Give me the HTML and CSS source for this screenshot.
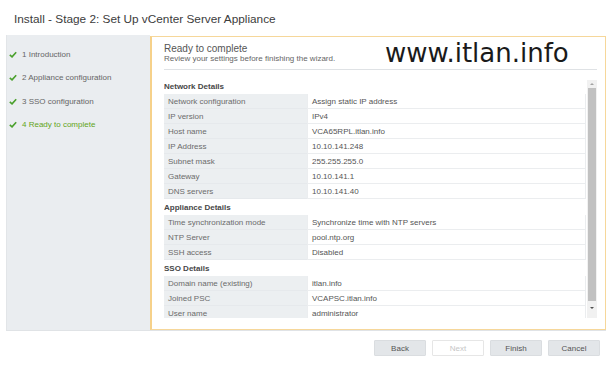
FILE: index.html
```html
<!DOCTYPE html>
<html lang="en">
<head>
    <meta charset="UTF-8">
    <title>Install - Stage 2</title>
    <link rel="stylesheet" href="styles.css">
</head>
<body>
    <h1 class="title">Install - Stage 2: Set Up vCenter Server Appliance</h1>
    <div class="wizard">
        <ul class="steps">
            <li class="step"><svg class="check" viewBox="0 0 10 8"><polyline points="1,4.5 3.8,7 9,1.2"/></svg>1 Introduction</li>
            <li class="step"><svg class="check" viewBox="0 0 10 8"><polyline points="1,4.5 3.8,7 9,1.2"/></svg>2 Appliance configuration</li>
            <li class="step"><svg class="check" viewBox="0 0 10 8"><polyline points="1,4.5 3.8,7 9,1.2"/></svg>3 SSO configuration</li>
            <li class="step active"><svg class="check" viewBox="0 0 10 8"><polyline points="1,4.5 3.8,7 9,1.2"/></svg>4 Ready to complete</li>
        </ul>
        <div class="content">
            <div class="head">
                <div class="head-title">Ready to complete</div>
                <div class="head-sub">Review your settings before finishing the wizard.</div>
            </div>
            <div class="watermark">www.itlan.info</div>
            <div class="scroll">
                <div class="table">
                    <div class="section first">Network Details</div>
                    <div class="row"><div class="label">Network configuration</div><div class="value">Assign static IP address</div></div>
                    <div class="row"><div class="label">IP version</div><div class="value">IPv4</div></div>
                    <div class="row"><div class="label">Host name</div><div class="value">VCA65RPL.itlan.info</div></div>
                    <div class="row"><div class="label">IP Address</div><div class="value">10.10.141.248</div></div>
                    <div class="row"><div class="label">Subnet mask</div><div class="value">255.255.255.0</div></div>
                    <div class="row"><div class="label">Gateway</div><div class="value">10.10.141.1</div></div>
                    <div class="row"><div class="label">DNS servers</div><div class="value">10.10.141.40</div></div>

                    <div class="section">Appliance Details</div>
                    <div class="row"><div class="label">Time synchronization mode</div><div class="value">Synchronize time with NTP servers</div></div>
                    <div class="row"><div class="label">NTP Server</div><div class="value">pool.ntp.org</div></div>
                    <div class="row"><div class="label">SSH access</div><div class="value">Disabled</div></div>

                    <div class="section">SSO Details</div>
                    <div class="row"><div class="label">Domain name (existing)</div><div class="value">itlan.info</div></div>
                    <div class="row"><div class="label">Joined PSC</div><div class="value">VCAPSC.itlan.info</div></div>
                    <div class="row"><div class="label">User name</div><div class="value">administrator</div></div>
                </div>
                <div class="scrollbar">
                    <span class="arrow up"></span>
                    <span class="thumb"></span>
                    <span class="arrow down"></span>
                </div>
            </div>
        </div>
    </div>
    <div class="buttons">
        <button class="btn">Back</button>
        <button class="btn disabled">Next</button>
        <button class="btn">Finish</button>
        <button class="btn">Cancel</button>
    </div>
</body>
</html>
```

FILE: styles.css
```css
body {
    margin: 0;
    background-color: #fff;
    font-family: 'Liberation Sans', Arial, sans-serif;
    color: #555;
}

.title {
    margin: 0;
    padding: 12px 0 0 14px;
    height: 23px;
    font-size: 11.8px;
    font-weight: normal;
    line-height: 14px;
    color: #3c3c3c;
}

.wizard {
    display: flex;
    margin: 0 6px 0 6px;
    height: 295px;
    border-bottom: 1px solid #e0e3e6;
}

/* Steps */
.steps {
    width: 144px;
    margin: 0;
    padding: 8px 0 0 0;
    list-style: none;
    background-color: #eaedf0;
    border-left: 1px solid #e2e5e8;
    box-sizing: border-box;
}

.step {
    display: flex;
    align-items: center;
    height: 23.3px;
    font-size: 8px;
    color: #666;
}

.step.active {
    color: #62a420;
}

.check {
    width: 8px;
    height: 7px;
    margin: 0 5px 0 2px;
    fill: none;
    stroke: #4aa02c;
    stroke-width: 2;
}

/* Content panel */
.content {
    position: relative;
    flex: 1;
    margin-top: 1px;
    padding: 0 8px 0 12px;
    border: 1px solid #f6d79a;
    border-left: 2px solid #f6d18a;
    background-color: #fff;
}

.head {
    padding: 6px 0 5px;
    border-bottom: 1px solid #dfe2e5;
}

.head-title {
    font-size: 10px;
    line-height: 11px;
    color: #555;
}

.head-sub {
    font-size: 8px;
    line-height: 10px;
    color: #666;
}

.watermark {
    position: absolute;
    top: 1px;
    left: 233px;
    font-family: 'DejaVu Sans', sans-serif;
    font-size: 26px;
    color: #1a1a1a;
}

.scroll {
    display: flex;
    gap: 1px;
    margin-top: 10px;
    height: 238px;
    overflow: hidden;
}

.table {
    flex: 1;
}

.section {
    height: 16px;
    line-height: 17px;
    font-size: 8px;
    font-weight: bold;
    color: #474747;
}

.section.first {
    height: 14px;
    line-height: 14px;
}

.row {
    display: flex;
    height: 15px;
    font-size: 8px;
    line-height: 15px;
}

.label {
    width: 143px;
    padding-left: 4px;
    box-sizing: border-box;
    background-color: #eceff1;
    border-bottom: 1px solid #e6e9ec;
    color: #6b6b6b;
    white-space: nowrap;
}

.value {
    flex: 1;
    padding-left: 4px;
    border: 1px solid #ebedef;
    border-top: none;
    color: #555;
    white-space: nowrap;
}

.scrollbar {
    display: flex;
    flex-direction: column;
    align-items: center;
    width: 10px;
    background-color: #f1f1f1;
}

.arrow {
    width: 0;
    height: 0;
    border-left: 2px solid transparent;
    border-right: 2px solid transparent;
}

.arrow.up {
    margin: 3px 0 3px;
    border-bottom: 2px solid #a3a3a3;
}

.arrow.down {
    margin: 6px 0 0;
    border-top: 2px solid #505050;
}

.thumb {
    width: 8px;
    height: 213px;
    background-color: #c1c1c1;
}

/* Buttons */
.buttons {
    display: flex;
    justify-content: flex-end;
    gap: 6px;
    padding: 9px 12px 0 0;
}

.btn {
    width: 52px;
    height: 16px;
    padding: 0;
    font-family: 'Liberation Sans', Arial, sans-serif;
    font-size: 8px;
    color: #555;
    background-color: #e3e6e9;
    border: 1px solid #dadde0;
    border-radius: 1px;
}

.btn.disabled {
    background-color: #fff;
    border-color: #e6e6e6;
    color: #c6c6c6;
}
```
